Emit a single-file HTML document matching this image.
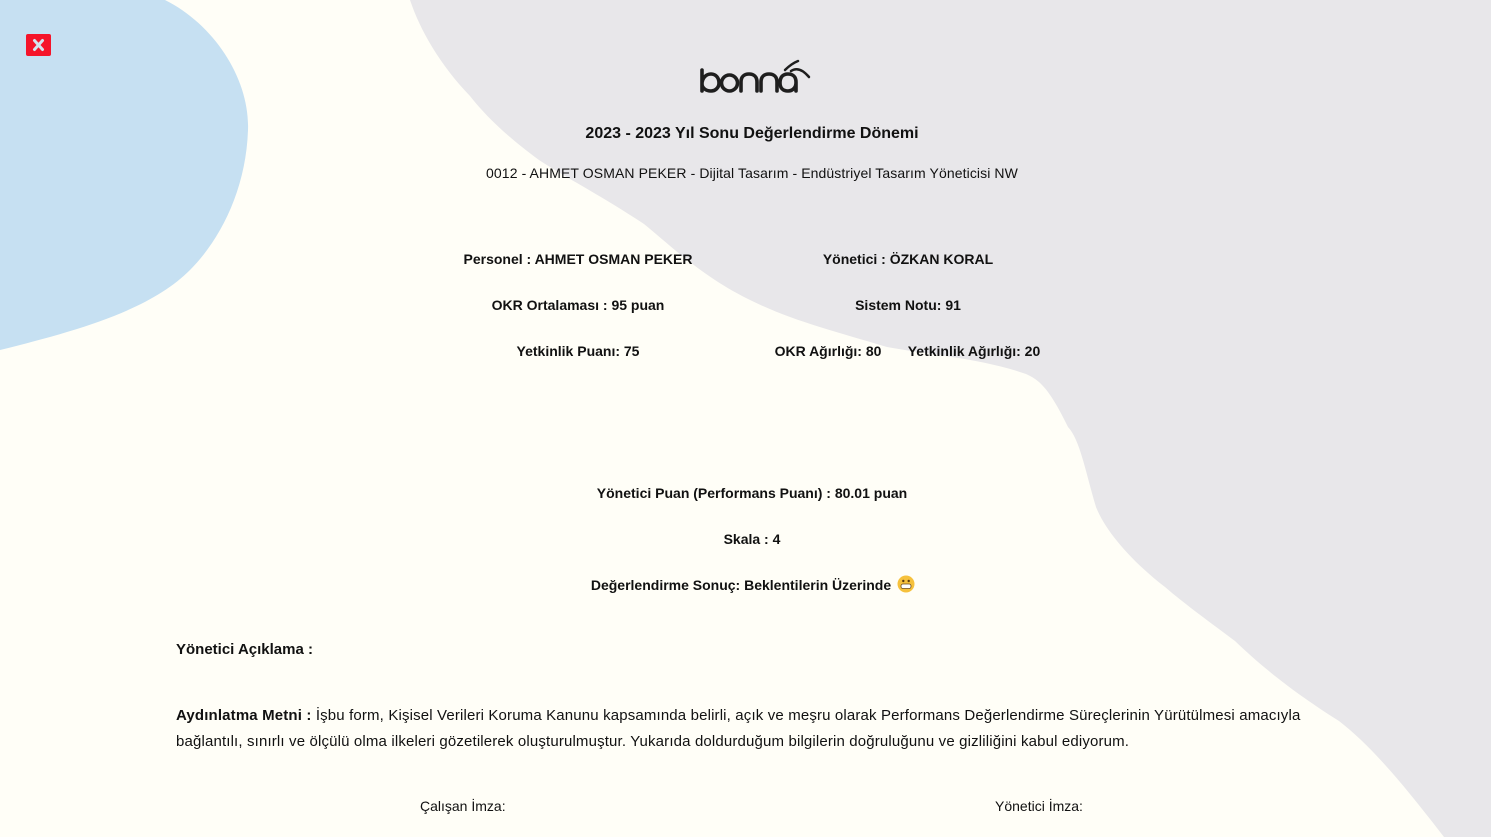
<!DOCTYPE html>
<html><head><meta charset="utf-8">
<style>
html,body{margin:0;padding:0}
body{width:1491px;height:837px;position:relative;overflow:hidden;background:#fffef7;font-family:"Liberation Sans",Arial,sans-serif;color:#111}
.t{position:absolute;white-space:nowrap;transform:translateX(-50%);font-size:14px}
.b{font-weight:bold}
</style></head><body>
<svg width="1491" height="837" style="position:absolute;left:0;top:0">
<path d="M0,0 L165,0 C215,25 250,80 248,130 C246,190 220,240 190,270 C150,310 80,330 0,350 Z" fill="#c6e0f2"/>
<path d="M410,0 L1491,0 L1491,837 L1444,837 C1400,780 1370,745 1339,721 C1290,690 1260,665 1235,641 C1200,615 1180,600 1165,587 C1130,560 1105,530 1096,507 C1085,470 1080,440 1068,427 C1050,390 1040,380 1026,374 C980,358 930,355 887,347 C830,330 790,320 748,299 C700,275 670,245 644,224 C600,195 570,180 539,160 C505,135 485,115 470,96 C440,65 420,30 410,0 Z" fill="#e8e7ea"/>
</svg>
<div style="position:absolute;left:26px;top:34px;width:25px;height:22px;background:#f5142a;border-radius:2px"></div>
<svg width="25" height="22" style="position:absolute;left:26px;top:34px"><path d="M8.5,6.5 L16.5,15.5 M16.5,6.5 L8.5,15.5" stroke="#d4e4f0" stroke-width="3" stroke-linecap="round"/></svg>
<svg width="120" height="40" style="position:absolute;left:695px;top:58px" fill="none" stroke="#1e1e1e" stroke-width="3.6" stroke-linecap="round">
<path d="M7,12 L7,33 M7,26 C7,20 11,16 16,16 C21,16 24,20 24,25 C24,30 20,33 16,33 C11,33 7,30 7,26"/>
<circle cx="34.5" cy="25" r="8"/>
<path d="M46,33 L46,24 C46,19 49,16 54,16 C59,16 62,19 62,24 L62,33"/>
<path d="M66,33 L66,24 C66,19 69,16 74,16 C79,16 82,19 82,24 L82,33"/>
<path d="M101,33 L101,24 C101,19 98,16 93,16 C88,16 85,19 85,25 C85,30 88,33 93,33 C98,33 101,29 101,25"/>
<path d="M90,12 C94,8 98,5 103,3" stroke-width="2.5"/>
<path d="M96,13 C102,9 108,12 114,19" stroke-width="2.5"/>
</svg>
<div class="t b" style="left:752px;top:125px;font-size:16px">2023 - 2023 Yıl Sonu Değerlendirme Dönemi</div>
<div class="t" style="left:752px;top:165px;letter-spacing:0.1px">0012 - AHMET OSMAN PEKER - Dijital Tasarım - Endüstriyel Tasarım Yöneticisi NW</div>
<div class="t b" style="left:578px;top:251px">Personel : AHMET OSMAN PEKER</div>
<div class="t b" style="left:908px;top:251px">Yönetici : ÖZKAN KORAL</div>
<div class="t b" style="left:578px;top:297px">OKR Ortalaması : 95 puan</div>
<div class="t b" style="left:908px;top:297px">Sistem Notu: 91</div>
<div class="t b" style="left:578px;top:343px">Yetkinlik Puanı: 75</div>
<div class="t b" style="left:828px;top:343px">OKR Ağırlığı: 80</div>
<div class="t b" style="left:974px;top:343px">Yetkinlik Ağırlığı: 20</div>
<div class="t b" style="left:752px;top:485px">Yönetici Puan (Performans Puanı) : 80.01 puan</div>
<div class="t b" style="left:752px;top:531px">Skala : 4</div>
<div class="t b" style="left:741px;top:577px">Değerlendirme Sonuç: Beklentilerin Üzerinde</div>
<svg width="18" height="18" style="position:absolute;left:897px;top:575px"><circle cx="9" cy="9" r="8.5" fill="#f6c13c"/><rect x="4" y="9" width="10" height="4.5" rx="2" fill="#fff" stroke="#6b4a1a" stroke-width="0.8"/><circle cx="6.3" cy="6" r="1.2" fill="#5a3a10"/><circle cx="11.7" cy="6" r="1.2" fill="#5a3a10"/></svg>
<div class="b" style="position:absolute;left:176px;top:641px;font-size:15px">Yönetici Açıklama :</div>
<div style="position:absolute;left:176px;top:703px;width:1135px;font-size:15px;line-height:26px;letter-spacing:0.15px"><b>Aydınlatma Metni :</b> İşbu form, Kişisel Verileri Koruma Kanunu kapsamında belirli, açık ve meşru olarak Performans Değerlendirme Süreçlerinin Yürütülmesi amacıyla bağlantılı, sınırlı ve ölçülü olma ilkeleri gözetilerek oluşturulmuştur. Yukarıda doldurduğum bilgilerin doğruluğunu ve gizliliğini kabul ediyorum.</div>
<div style="position:absolute;left:420px;top:798px;font-size:14px">Çalışan İmza:</div>
<div style="position:absolute;left:995px;top:798px;font-size:14px">Yönetici İmza:</div>
</body></html>
